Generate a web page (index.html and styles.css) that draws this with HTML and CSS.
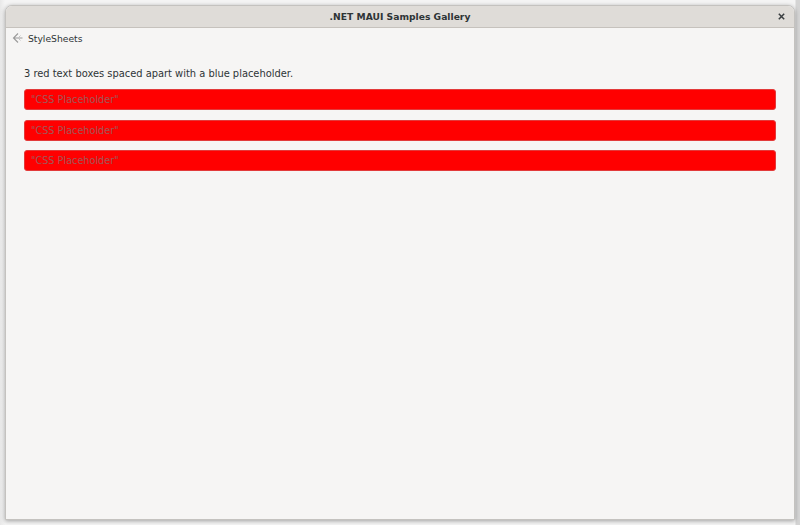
FILE: index.html
```html
<!DOCTYPE html>
<html>
<head>
<meta charset="utf-8">
<link rel="stylesheet" href="styles.css">
</head>
<body>
<div class="desktop">
  <div class="window">
    <div class="titlebar">
      <span class="title">.NET MAUI Samples Gallery</span>
      <span class="close">
        <svg width="7" height="7" viewBox="0 0 7 7"><path d="M0.8 0.8L6.2 6.2M6.2 0.8L0.8 6.2" stroke="#3a3f41" stroke-width="1.5"/></svg>
      </span>
    </div>
    <div class="navbar">
      <svg class="back" width="12" height="12" viewBox="0 0 12 12">
        <path d="M6 1.5L1.5 6L6 10.5M1.5 6H10.5" fill="none" stroke="#9a9a9a" stroke-width="1.1"/>
        <path d="M8.5 3.5L6 6L8.5 8.5" fill="none" stroke="#c4c4c4" stroke-width="1"/>
      </svg>
      <span class="navtitle">StyleSheets</span>
    </div>
    <div class="content">
      <p class="label">3 red text boxes spaced apart with a blue placeholder.</p>
      <div class="entries">
        <div class="entry">"CSS Placeholder"</div>
        <div class="entry">"CSS Placeholder"</div>
        <div class="entry">"CSS Placeholder"</div>
      </div>
    </div>
  </div>
</div>
</body>
</html>
```
FILE: styles.css
```css
html, body {
  margin: 0;
  padding: 0;
  width: 800px;
  height: 525px;
  overflow: hidden;
  font-family: "DejaVu Sans", sans-serif;
}
.desktop {
  width: 800px;
  height: 525px;
  background: linear-gradient(to right, #e8e8e8 0, #f4f4f4 5px, #f4f4f4 795px, #d4d4d4 796px);
  padding: 5px 5px 6px 5px;
  box-sizing: border-box;
}
.window {
  height: 513px;
  background: #f6f5f4;
  border: 1px solid #c4c2bf;
  border-radius: 7px 7px 0 0;
  box-shadow: 0 1px 4px rgba(0,0,0,0.35);
  display: flex;
  flex-direction: column;
  overflow: hidden;
}
.titlebar {
  height: 21px;
  flex: none;
  background: #dfdcd8;
  border-bottom: 1px solid #c6c2bd;
  display: flex;
  align-items: center;
  justify-content: center;
  position: relative;
}
.title {
  font-weight: bold;
  font-size: 9.2px;
  color: #2e3436;
}
.close {
  position: absolute;
  right: 9px;
  top: 7px;
  width: 7px;
  height: 7px;
  display: flex;
}
.navbar {
  height: 20px;
  display: flex;
  align-items: center;
  padding-left: 6px;
  flex: none;
}
.back {
  margin-right: 4px;
}
.navtitle {
  font-size: 9.2px;
  color: #2e3436;
}
.content {
  padding: 19px 18px 0 18px;
}
.label {
  margin: 0 0 8px 0;
  font-size: 9.9px;
  color: #2e3436;
  line-height: 14px;
}
.entries {
  display: flex;
  flex-direction: column;
  gap: 9.5px;
}
.entry {
  height: 21px;
  box-sizing: border-box;
  background: #ff0000;
  border: 1px solid #e23a3a;
  border-radius: 3px;
  padding-left: 6px;
  font-size: 9.7px;
  line-height: 19px;
  color: #a05858;
}
```
